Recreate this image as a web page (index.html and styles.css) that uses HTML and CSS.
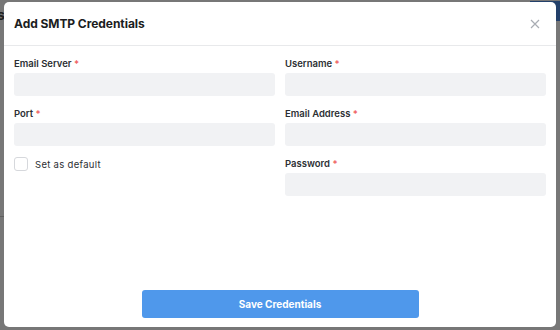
FILE: index.html
```html
<!DOCTYPE html>
<html lang="en">

<head>
    <meta charset="UTF-8">
    <meta name="viewport" content="width=device-width, initial-scale=1.0">
    <title>SMTP Credentials</title>
    <link rel="stylesheet" href="styles.css">
</head>

<body>
    <!-- Dimmed page behind the modal -->
    <div class="backdrop">
        <span class="behind-text">s</span>
        <div class="behind-bar"></div>
        <div class="behind-line"></div>
    </div>

    <!-- SMTP Modal -->
    <div class="modal">
        <div class="modal-header">
            <h3>Add SMTP Credentials</h3>
            <button class="close-btn" aria-label="Close">
                <svg width="10" height="10" viewBox="0 0 10 10">
                    <path d="M1 1L9 9M9 1L1 9" stroke="#a9adb3" stroke-width="1.2" fill="none"/>
                </svg>
            </button>
        </div>

        <div class="modal-body">
            <div class="form-grid">
                <div class="column">
                    <div class="field">
                        <label>Email Server <span class="req">*</span></label>
                        <input type="text">
                    </div>
                    <div class="field">
                        <label>Port <span class="req">*</span></label>
                        <input type="text">
                    </div>
                    <label class="check">
                        <span class="box"></span>
                        Set as default
                    </label>
                </div>
                <div class="column">
                    <div class="field">
                        <label>Username <span class="req">*</span></label>
                        <input type="text">
                    </div>
                    <div class="field">
                        <label>Email Address <span class="req">*</span></label>
                        <input type="text">
                    </div>
                    <div class="field">
                        <label>Password <span class="req">*</span></label>
                        <input type="password">
                    </div>
                </div>
            </div>

            <div class="actions">
                <button class="save-btn">Save Credentials</button>
            </div>
        </div>
    </div>
</body>

</html>
```

FILE: styles.css
```css
body {
    font-family: Inter, "Noto Sans", sans-serif;
    margin: 0;
    padding: 2px 4px 3px 4px;
    height: 330px;
    box-sizing: border-box;
    background-color: #777777;
    overflow: hidden;
}

.backdrop {
    position: absolute;
    top: 0;
    left: 0;
    width: 560px;
    height: 330px;
}

.behind-text {
    position: absolute;
    left: -3px;
    top: 6px;
    font-size: 14px;
    font-weight: 700;
    color: #222;
}

.behind-bar {
    position: absolute;
    right: 0;
    top: 1px;
    width: 30px;
    height: 20px;
    background-color: #23406a;
}

.behind-line {
    position: absolute;
    left: 0;
    top: 216px;
    width: 10px;
    height: 1px;
    background-color: #5f5f5f;
}

.modal {
    position: relative;
    height: 325px;
    background-color: white;
    border-radius: 5px;
    display: flex;
    flex-direction: column;
}

.modal-header {
    display: flex;
    align-items: center;
    justify-content: space-between;
    height: 43px;
    padding: 0 16px 0 10px;
    border-bottom: 1px solid #e8e9eb;
}

.modal-header h3 {
    margin: 0;
    font-size: 12px;
    font-weight: 700;
    letter-spacing: -0.05px;
    color: #1b1d21;
}

.close-btn {
    border: none;
    background: none;
    padding: 0;
    display: flex;
    cursor: pointer;
}

.modal-body {
    flex: 1;
    display: flex;
    flex-direction: column;
    padding: 11px 10px 9px 10px;
}

.form-grid {
    display: grid;
    grid-template-columns: 1fr 1fr;
    gap: 10px;
}

.field {
    margin-bottom: 11px;
}

.field label {
    display: block;
    font-size: 9.5px;
    font-weight: 600;
    line-height: 14px;
    color: #2c2f33;
    margin-bottom: 2px;
}

.req {
    color: #ef5a5a;
}

input {
    display: block;
    width: 100%;
    box-sizing: border-box;
    height: 23px;
    border: none;
    border-radius: 3px;
    background-color: #f1f2f4;
}

.check {
    display: flex;
    align-items: center;
    gap: 7px;
    font-size: 9.5px;
    color: #2c2f33;
    letter-spacing: 0.3px;
}

.box {
    width: 12px;
    height: 12px;
    border: 1px solid #d6d8dc;
    border-radius: 3px;
}

.actions {
    margin-top: auto;
    display: flex;
    justify-content: center;
}

.save-btn {
    width: 277px;
    height: 28px;
    border: none;
    border-radius: 3px;
    background-color: #4f98eb;
    color: white;
    font-family: inherit;
    font-size: 10px;
    font-weight: 700;
    cursor: pointer;
}
```
